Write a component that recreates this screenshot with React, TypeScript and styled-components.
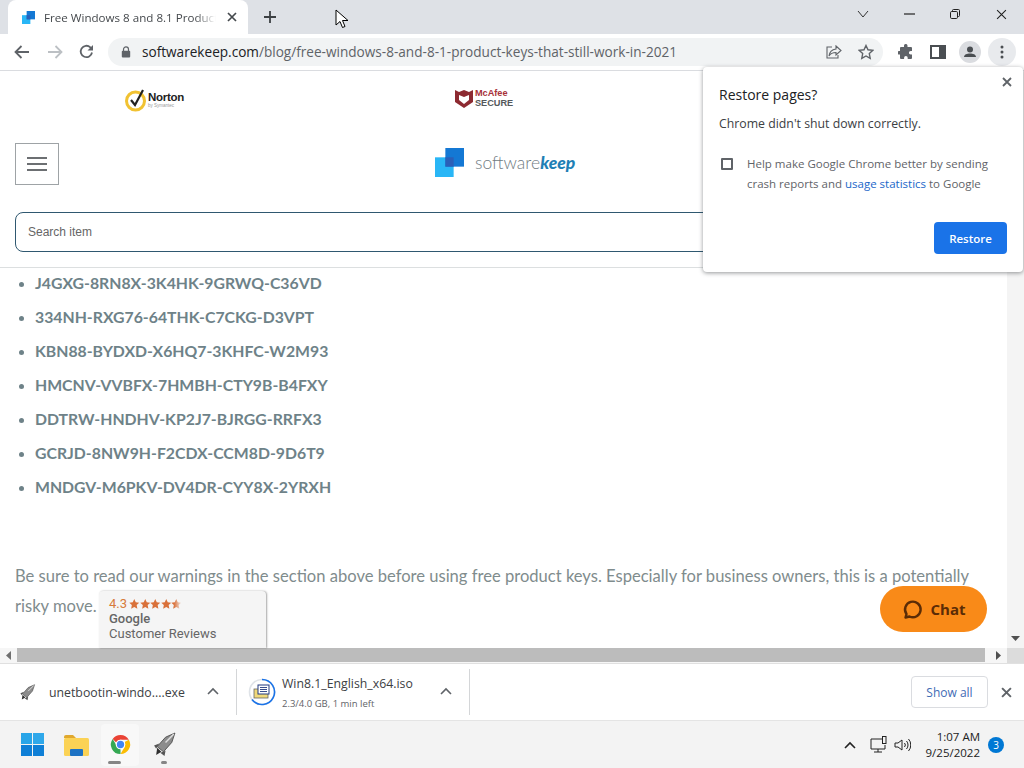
import styled, { createGlobalStyle } from "styled-components";

const Global = createGlobalStyle`
  html, body { margin: 0; padding: 0; background: #fff; }
  body { font-family: "Open Sans", "Liberation Sans", sans-serif; }
  * { box-sizing: border-box; }
`;

const Screen = styled.div`
  position: relative;
  width: 1024px;
  height: 768px;
  overflow: hidden;
  display: flex;
  flex-direction: column;
  background: #fff;
`;

/* ---- tab strip ---- */
const TabStrip = styled.div`
  height: 34px;
  background: #dee1e6;
  display: flex;
  align-items: flex-end;
  padding-left: 8px;
`;
const Tab = styled.div`
  width: 240px;
  height: 34px;
  background: #fff;
  border-radius: 8px 8px 0 0;
  display: flex;
  align-items: center;
  padding: 0 10px 0 14px;
`;
const TabTitle = styled.span`
  margin-left: 9px;
  width: 172px;
  font-size: 11.6px;
  color: #45494d;
  white-space: nowrap;
  -webkit-mask-image: linear-gradient(90deg, #000 88%, transparent);
  mask-image: linear-gradient(90deg, #000 88%, transparent);
`;
const TabClose = styled.span`
  display: flex;
  margin-left: 11px;
`;
const NewTab = styled.span`
  display: flex;
  align-self: center;
  margin-left: 16px;
`;
const WindowControls = styled.div`
  margin-left: auto;
  align-self: flex-start;
  height: 28px;
  display: flex;
  align-items: center;
`;
const WinButton = styled.span`
  width: 46px;
  display: flex;
  justify-content: center;
`;
const Cursor = styled.svg`
  position: absolute;
  left: 335px;
  top: 9px;
`;

/* ---- toolbar ---- */
const Toolbar = styled.div`
  height: 37px;
  background: #fff;
  border-bottom: 1px solid #dadce0;
  display: flex;
  align-items: center;
  padding: 0 6px 1px 14px;
`;
const NavButton = styled.span<{ $w: number }>`
  width: ${(p) => p.$w}px;
  display: flex;
`;
const Omnibox = styled.div`
  width: 775px;
  height: 28px;
  border-radius: 14px;
  background: #f1f3f4;
  display: flex;
  align-items: center;
  padding: 0 9px 0 13px;
  margin-left: 2px;
`;
const Url = styled.span`
  margin-left: 11px;
  font-size: 13.6px;
  color: #5f6368;
  white-space: nowrap;
  b {
    font-weight: 400;
    color: #202124;
  }
`;
const OmniActions = styled.div`
  margin-left: auto;
  display: flex;
  gap: 16px;
  align-items: center;
`;
const ToolIcons = styled.div`
  margin-left: 15px;
  display: flex;
  align-items: center;
  gap: 16px;
`;
const ProfileIcon = styled.svg`
  margin-left: -3px;
`;
const MenuCircle = styled.span`
  width: 28px;
  height: 28px;
  border-radius: 50%;
  background: #e8eaed;
  display: flex;
  align-items: center;
  justify-content: center;
  margin-left: -9px;
`;

/* ---- web page ---- */
const Viewport = styled.div`
  position: relative;
  height: 577px;
  display: flex;
`;
const Page = styled.div`
  flex: 1;
  overflow: hidden;
  font-family: Lato, "Open Sans", sans-serif;
`;
const TrustRow = styled.div`
  height: 58px;
  display: flex;
  align-items: center;
  padding-left: 125px;
  gap: 271px;
`;
const Logo = styled.div<{ $lift?: number }>`
  display: flex;
  align-items: center;
  gap: 2px;
  margin-bottom: ${(p) => p.$lift ?? 0}px;
`;
const LogoText = styled.div`
  display: flex;
  flex-direction: column;
  font-family: "Liberation Sans", sans-serif;
`;
const NortonName = styled.span`
  font-size: 11.5px;
  font-weight: 700;
  letter-spacing: -0.3px;
  line-height: 11px;
  color: #222;
`;
const NortonBy = styled.span`
  font-size: 4.5px;
  line-height: 6px;
  color: #999;
`;
const McAfeeName = styled.span<{ $dark?: boolean }>`
  font-size: 9.2px;
  font-weight: 700;
  line-height: 10px;
  color: ${(p) => (p.$dark ? "#55595c" : "#a8323a")};
`;
const HeaderRow = styled.div`
  height: 60px;
  margin-top: 5px;
  padding-left: 15px;
  display: flex;
  align-items: center;
`;
const Burger = styled.div`
  width: 44px;
  height: 42px;
  border: 1px solid #9ea3a6;
  display: flex;
  flex-direction: column;
  align-items: center;
  justify-content: center;
  gap: 4px;
  i {
    display: block;
    width: 20px;
    height: 2px;
    background: #6c6f72;
  }
`;
const Brand = styled.div`
  margin: 0 0 3px 376px;
  display: flex;
  align-items: center;
`;
const BrandName = styled.span`
  margin-left: 11px;
  font-size: 17.5px;
  font-weight: 300;
  color: #6f7b82;
  b {
    font-weight: 900;
    font-style: italic;
    color: #1f7fb5;
  }
`;
const SearchBand = styled.div`
  height: 56px;
  margin-top: 18px;
  padding: 0 15px;
  border-bottom: 1px solid #dcdfe0;
`;
const SearchBox = styled.div`
  width: 960px;
  height: 40px;
  border: 1px solid #2f5870;
  border-radius: 8px;
  padding-left: 12px;
  display: flex;
  align-items: center;
  font-family: "Liberation Sans", sans-serif;
  font-size: 12px;
  color: #666;
`;
const KeyList = styled.ul`
  margin: 0;
  padding: 0 0 0 35px;
`;
const Key = styled.li`
  height: 34px;
  line-height: 29px;
  font-size: 15.8px;
  font-weight: 700;
  color: #6e8288;
  &::marker {
    font-size: 14px;
  }
`;
const Para = styled.p`
  margin: 55px 0 0 15px;
  width: 965px;
  font-size: 16.57px;
  line-height: 30px;
  color: #7f8c8d;
`;
const VScroll = styled.div`
  width: 17px;
  background: #f4f4f4;
  display: flex;
  align-items: flex-end;
  justify-content: center;
  padding-bottom: 7px;
`;
const Reviews = styled.div`
  position: absolute;
  left: 99px;
  top: 520px;
  width: 167px;
  height: 57px;
  padding: 5px 0 0 10px;
  background: #f5f5f5;
  border-radius: 4px 4px 0 0;
  box-shadow: 1px 0 2px rgba(0, 0, 0, 0.35);
  font-family: Roboto, "Liberation Sans", sans-serif;
  color: #666;
  font-size: 13px;
  line-height: 15px;
`;
const Rating = styled.div`
  display: flex;
  align-items: center;
  gap: 2px;
  color: #d77b3a;
  font-size: 13px;
`;
const Stars = styled.span`
  display: flex;
  -webkit-mask-image: linear-gradient(90deg, #000 85%, transparent);
  mask-image: linear-gradient(90deg, #000 85%, transparent);
`;
const ReviewBrand = styled.div`
  font-weight: 500;
`;
const ChatButton = styled.div`
  position: absolute;
  left: 880px;
  top: 515px;
  width: 107px;
  height: 46px;
  border-radius: 23px;
  background: #f98a18;
  display: flex;
  align-items: center;
  justify-content: center;
  gap: 8px;
  font-family: "Open Sans", sans-serif;
  font-size: 15px;
  font-weight: 700;
  color: #5b2c06;
`;
const Bubble = styled.div`
  position: absolute;
  left: 703px;
  top: -4px;
  width: 320px;
  height: 205px;
  background: #fff;
  border-radius: 4px;
  box-shadow: 0 1px 4px rgba(60, 64, 67, 0.55);
  padding: 16px;
  font-family: "Open Sans", sans-serif;
`;
const BubbleClose = styled.span`
  position: absolute;
  right: 11px;
  top: 10px;
  display: flex;
`;
const BubbleTitle = styled.div`
  font-size: 14px;
  line-height: 24px;
  color: #202124;
`;
const BubbleText = styled.div`
  margin-top: 8px;
  font-size: 12.3px;
  line-height: 18px;
  color: #3c4043;
`;
const OptIn = styled.div`
  margin-top: 21px;
  display: flex;
  font-size: 11.5px;
  line-height: 20px;
  color: #5f6368;
  a {
    color: #1a67c9;
  }
`;
const Check = styled.span`
  flex: none;
  width: 12px;
  height: 12px;
  margin: 4px 14px 0 2px;
  border: 2px solid #5f6368;
  border-radius: 1px;
`;
const BubbleFooter = styled.div`
  margin-top: 28px;
  display: flex;
  justify-content: flex-end;
`;
const PrimaryButton = styled.div`
  width: 73px;
  height: 32px;
  background: #1a73e8;
  border-radius: 4px;
  color: #fff;
  font-size: 11.5px;
  font-weight: 600;
  display: flex;
  align-items: center;
  justify-content: center;
`;

/* ---- horizontal scrollbar ---- */
const HScroll = styled.div`
  height: 16px;
  background: #f6f6f6;
  border-bottom: 1px solid #e0e0e0;
  display: flex;
`;
const HArrow = styled.span<{ $push?: boolean }>`
  width: 17px;
  height: 14px;
  margin-left: ${(p) => (p.$push ? "5px" : "0")};
  display: flex;
  align-items: center;
  justify-content: center;
`;
const HThumb = styled.div`
  width: 968px;
  height: 14px;
  background: #bcbcbc;
`;
const Corner = styled.div`
  width: 17px;
  height: 15px;
  background: #dcdcdc;
`;

/* ---- download shelf ---- */
const Shelf = styled.div`
  height: 57px;
  background: #fff;
  border-bottom: 1px solid #e4e4e4;
  display: flex;
  align-items: center;
`;
const Download = styled.div<{ $w: number; $pad: number }>`
  width: ${(p) => p.$w}px;
  height: 46px;
  border-right: 1px solid #d4d6d8;
  display: flex;
  align-items: center;
  padding-left: ${(p) => p.$pad}px;
  position: relative;
`;
const FileName = styled.div<{ $flush?: boolean }>`
  margin-left: ${(p) => (p.$flush ? 0 : 13)}px;
  font-size: 12.3px;
  color: #3c4043;
  white-space: nowrap;
`;
const FileStack = styled.div`
  margin-left: 6px;
  display: flex;
  flex-direction: column;
  gap: 5px;
`;
const FileSub = styled.div`
  font-size: 9.5px;
  color: #5f6368;
`;
const Chevron = styled.span`
  position: absolute;
  right: 17px;
  top: 18px;
  display: flex;
`;
const ShowAll = styled.div`
  margin-left: auto;
  width: 77px;
  height: 32px;
  border: 1px solid #dadce0;
  border-radius: 4px;
  color: #3f6cb5;
  font-size: 12px;
  font-weight: 500;
  display: flex;
  align-items: center;
  justify-content: center;
`;
const ShelfClose = styled.span`
  margin: 0 12px 0 13px;
  display: flex;
`;

/* ---- taskbar ---- */
const Taskbar = styled.div`
  flex: 1;
  background: #f3f3f3;
  display: flex;
  align-items: center;
  padding: 0 20px 0 21px;
`;
const TaskIcon = styled.span<{ $active?: boolean; $first?: boolean }>`
  position: relative;
  width: ${(p) => (p.$active ? 38 : 44)}px;
  height: 42px;
  margin: 0 ${(p) => (p.$active ? 3 : 0)}px 0 ${(p) => (p.$first ? 10 : p.$active ? 3 : 0)}px;
  display: flex;
  align-items: center;
  justify-content: center;
  background: ${(p) => (p.$active ? "#f8f8f8" : "transparent")};
  border-radius: 4px;
`;
const RunDot = styled.i<{ $w: number; $off: number }>`
  position: absolute;
  bottom: 2px;
  left: 50%;
  margin-left: ${(p) => p.$off}px;
  width: ${(p) => p.$w}px;
  height: 3px;
  border-radius: 2px;
  background: #858585;
`;
const Tray = styled.div`
  margin-left: auto;
  display: flex;
  align-items: center;
`;
const TrayIcon = styled.svg<{ $gap: number }>`
  margin-left: ${(p) => p.$gap}px;
`;
const Clock = styled.div`
  margin-left: 15px;
  text-align: right;
  font-size: 11.5px;
  line-height: 16px;
  color: #222;
`;
const Badge = styled.span`
  margin-left: 8px;
  width: 16px;
  height: 16px;
  border-radius: 50%;
  background: #0078d4;
  color: #fff;
  font-size: 10px;
  display: flex;
  align-items: center;
  justify-content: center;
`;

/* ---- drawings ---- */
const X = ({ s = 10, w = 1.6, c = "#45494d" }: { s?: number; w?: number; c?: string }) => (
  <svg width={s} height={s} viewBox="0 0 10 10">
    <path d="M1 1l8 8M9 1l-8 8" stroke={c} strokeWidth={w} fill="none" />
  </svg>
);
const Squares = ({ s }: { s: number }) => (
  <svg width={s} height={s} viewBox="0 0 28 28">
    <rect x="0" y="9" width="18" height="19" fill="#29b6f6" />
    <rect x="10" y="0" width="18" height="18" fill="#1478d4" />
    <rect x="10" y="9" width="8" height="9" fill="#2a5fb8" />
  </svg>
);
const Up = ({ c = "#5f6368" }: { c?: string }) => (
  <svg width="12" height="8" viewBox="0 0 12 8">
    <path d="M1 7l5-5 5 5" stroke={c} strokeWidth="1.6" fill="none" />
  </svg>
);
const Rocket = ({ s }: { s: number }) => (
  <svg width={s} height={s} viewBox="0 0 24 24">
    <path d="M22 1l-3 9-8 9-6-5 8-9z" fill="#8c8c8c" stroke="#444" strokeWidth="0.8" />
    <path d="M7 11l-5 2 2 3zM13 18l-1 5-4-3z" fill="#555" />
    <path d="M5 15l4 4-5 3z" fill="#2f2f2f" />
    <path d="M21 2l-8 8" stroke="#ddd" strokeWidth="1.4" />
  </svg>
);
const Star = () => (
  <svg width="10.5" height="10" viewBox="0 0 10 10">
    <path d="M5 0l1.500 3.300 3.500.4-2.600 2.400.7 3.600L5 7.900 1.900 9.700l.7-3.600L0 3.700l3.500-.4z" fill="#d9713a" />
  </svg>
);

const keys = [
  "J4GXG-8RN8X-3K4HK-9GRWQ-C36VD",
  "334NH-RXG76-64THK-C7CKG-D3VPT",
  "KBN88-BYDXD-X6HQ7-3KHFC-W2M93",
  "HMCNV-VVBFX-7HMBH-CTY9B-B4FXY",
  "DDTRW-HNDHV-KP2J7-BJRGG-RRFX3",
  "GCRJD-8NW9H-F2CDX-CCM8D-9D6T9",
  "MNDGV-M6PKV-DV4DR-CYY8X-2YRXH",
];

const App = () => {
  return (
    <Screen>
      <Global />
      <TabStrip>
        <Tab>
          <Squares s={13} />
          <TabTitle>Free Windows 8 and 8.1 Product</TabTitle>
          <TabClose>
            <X s={10} w={1.7} />
          </TabClose>
        </Tab>
        <NewTab>
          <svg width="12" height="12" viewBox="0 0 12 12">
            <path d="M6 0v12M0 6h12" stroke="#3c4043" strokeWidth="1.8" />
          </svg>
        </NewTab>
        <WindowControls>
          <WinButton>
            <svg width="12" height="8" viewBox="0 0 12 8">
              <path d="M1 1l5 6 5-6" stroke="#333" fill="none" />
            </svg>
          </WinButton>
          <WinButton>
            <svg width="11" height="2" viewBox="0 0 11 2">
              <path d="M0 1h11" stroke="#222" strokeWidth="1.2" />
            </svg>
          </WinButton>
          <WinButton>
            <svg width="10" height="10" viewBox="0 0 10 10">
              <rect x="0.5" y="2.5" width="7" height="7" rx="1.2" stroke="#222" fill="none" />
              <path d="M2.500 2.500v-1a1 1 0 0 1 1-1h5a1 1 0 0 1 1 1v5a1 1 0 0 1-1 1h-1" stroke="#222" fill="none" />
            </svg>
          </WinButton>
          <WinButton>
            <X s={11} w={1} c="#222" />
          </WinButton>
        </WindowControls>
      </TabStrip>

      <Toolbar>
        <NavButton $w={33}>
          <svg width="16" height="14" viewBox="0 0 16 14">
            <path d="M15 7H2M7.500 1L1.500 7l6 6" stroke="#5f6368" strokeWidth="1.800" fill="none" />
          </svg>
        </NavButton>
        <NavButton $w={32}>
          <svg width="16" height="14" viewBox="0 0 16 14">
            <path d="M1 7h13M8.500 1l6 6-6 6" stroke="#bcc0c4" strokeWidth="1.800" fill="none" />
          </svg>
        </NavButton>
        <NavButton $w={27}>
          <svg width="15" height="15" viewBox="0 0 15 15">
            <path d="M13 8.500A5.700 5.700 0 1 1 11.300 3.300L13.500 5.200" stroke="#5f6368" strokeWidth="1.800" fill="none" />
            <path d="M14 1v5.500H8.500z" fill="#5f6368" />
          </svg>
        </NavButton>
        <Omnibox>
          <svg width="10" height="12" viewBox="0 0 10 12">
            <path d="M2.500 5V3.400a2.500 2.500 0 0 1 5 0V5" stroke="#5f6368" strokeWidth="1.200" fill="none" />
            <rect x="0.800" y="4.800" width="8.400" height="6.700" rx="1" fill="#5f6368" />
          </svg>
          <Url>
            <b>softwarekeep.com</b>/blog/free-windows-8-and-8-1-product-keys-that-still-work-in-2021
          </Url>
          <OmniActions>
            <svg width="16" height="14" viewBox="0 0 16 14">
              <path d="M10 1l5 4.500-5 4.500V7.500C6.500 7.500 4.500 8.500 3 11c.5-4 3-6.500 7-7z" stroke="#5f6368" strokeWidth="1.100" fill="none" />
              <path d="M6 2H1v11h11V10" stroke="#5f6368" strokeWidth="1.100" fill="none" />
            </svg>
            <svg width="16" height="16" viewBox="0 0 16 16">
              <path d="M8 1.500l2 4.300 4.700.6-3.400 3.200.9 4.700L8 12l-4.200 2.300.9-4.700L1.300 6.400 6 5.800z" stroke="#5f6368" strokeWidth="1.400" fill="none" />
            </svg>
          </OmniActions>
        </Omnibox>
        <ToolIcons>
          <svg width="16" height="16" viewBox="0 0 16 16">
            <path d="M6 1.500a1.800 1.800 0 0 1 3.500 0V3H13a1 1 0 0 1 1 1v3h-1.300a1.800 1.800 0 0 0 0 3.600H14V14a1 1 0 0 1-1 1h-3.300v-1.300a1.800 1.800 0 0 0-3.600 0V15H3a1 1 0 0 1-1-1v-3.500H.800a1.800 1.800 0 0 1 0-3.500H2V4a1 1 0 0 1 1-1h3z" fill="#5f6368" />
          </svg>
          <svg width="16" height="14" viewBox="0 0 16 14">
            <rect x="1" y="1" width="14" height="12" stroke="#4a4e52" strokeWidth="2" fill="none" />
            <rect x="9" y="1" width="6" height="12" fill="#4a4e52" />
          </svg>
          <ProfileIcon width="22" height="22" viewBox="0 0 22 22">
            <circle cx="11" cy="11" r="11" fill="#dadce0" />
            <circle cx="11" cy="8.500" r="3" fill="#4a4e52" />
            <path d="M5 16c0-2.500 3-3.600 6-3.600s6 1.100 6 3.600z" fill="#4a4e52" />
          </ProfileIcon>
          <MenuCircle>
            <svg width="4" height="14" viewBox="0 0 4 14">
              <circle cx="2" cy="2" r="1.500" fill="#4a4e52" />
              <circle cx="2" cy="7" r="1.500" fill="#4a4e52" />
              <circle cx="2" cy="12" r="1.500" fill="#4a4e52" />
            </svg>
          </MenuCircle>
        </ToolIcons>
      </Toolbar>

      <Viewport>
        <Page>
          <TrustRow>
            <Logo>
              <svg width="21" height="24" viewBox="0 0 21 24">
                <circle cx="10.500" cy="13" r="9" stroke="#f1c232" strokeWidth="3" fill="#fff" />
                <path d="M6 12l4 5 8-15" stroke="#222" strokeWidth="2.200" fill="none" />
              </svg>
              <LogoText>
                <NortonName>Norton</NortonName>
                <NortonBy>by Symantec</NortonBy>
              </LogoText>
            </Logo>
            <Logo $lift={4}>
              <svg width="18" height="20" viewBox="0 0 18 20">
                <path d="M0 2l4 2 5-2 5 2 4-2v12l-9 6-9-6z" fill="#8d2a31" />
                <path d="M4 7l5 2 5-2v5l-5 4-5-4z" fill="#fff" />
              </svg>
              <LogoText>
                <McAfeeName>McAfee</McAfeeName>
                <McAfeeName $dark>SECURE</McAfeeName>
              </LogoText>
            </Logo>
          </TrustRow>
          <HeaderRow>
            <Burger>
              <i />
              <i />
              <i />
            </Burger>
            <Brand>
              <Squares s={29} />
              <BrandName>
                software<b>keep</b>
              </BrandName>
            </Brand>
          </HeaderRow>
          <SearchBand>
            <SearchBox>Search item</SearchBox>
          </SearchBand>
          <KeyList>
            {keys.map((k) => (
              <Key key={k}>{k}</Key>
            ))}
          </KeyList>
          <Para>
            Be sure to read our warnings in the section above before using free product keys. Especially for business
            owners, this is a potentially risky move.
          </Para>
        </Page>
        <VScroll>
          <svg width="9" height="5" viewBox="0 0 9 5">
            <path d="M0 0h9L4.500 5z" fill="#505050" />
          </svg>
        </VScroll>

        <Reviews>
          <Rating>
            4.3
            <Stars>
              <Star />
              <Star />
              <Star />
              <Star />
              <Star />
            </Stars>
          </Rating>
          <ReviewBrand>Google</ReviewBrand>
          <div>Customer Reviews</div>
        </Reviews>

        <ChatButton>
          <svg width="21" height="21" viewBox="0 0 21 21">
            <path d="M3.500 18.500l1-3.500a7.800 7.800 0 1 1 3 2.500z" stroke="#5b2c06" strokeWidth="2.400" fill="none" strokeLinejoin="round" />
          </svg>
          Chat
        </ChatButton>

        <Bubble>
          <BubbleClose>
            <X s={10} w={1.8} c="#5f6368" />
          </BubbleClose>
          <BubbleTitle>Restore pages?</BubbleTitle>
          <BubbleText>Chrome didn't shut down correctly.</BubbleText>
          <OptIn>
            <Check />
            <div>
              Help make Google Chrome better by sending
              <br />
              crash reports and <a>usage statistics</a> to Google
            </div>
          </OptIn>
          <BubbleFooter>
            <PrimaryButton>Restore</PrimaryButton>
          </BubbleFooter>
        </Bubble>
      </Viewport>

      <HScroll>
        <HArrow>
          <svg width="5" height="9" viewBox="0 0 5 9">
            <path d="M5 0v9L0 4.500z" fill="#707070" />
          </svg>
        </HArrow>
        <HThumb />
        <HArrow $push>
          <svg width="5" height="9" viewBox="0 0 5 9">
            <path d="M0 0v9l5-4.500z" fill="#505050" />
          </svg>
        </HArrow>
        <Corner />
      </HScroll>

      <Shelf>
        <Download $w={237} $pad={19}>
          <Rocket s={17} />
          <FileName>unetbootin-windo....exe</FileName>
          <Chevron>
            <Up />
          </Chevron>
        </Download>
        <Download $w={233} $pad={11}>
          <svg width="28" height="28" viewBox="0 0 28 28">
            <circle cx="14" cy="14" r="12.500" stroke="#dfe3e8" strokeWidth="1.600" fill="none" />
            <path d="M14 1.500A12.500 12.500 0 1 1 4 21.500" stroke="#1a73e8" strokeWidth="1.600" fill="none" />
            <rect x="6" y="11" width="14" height="9" fill="#f0d97a" stroke="#666" strokeWidth="0.800" />
            <rect x="10" y="7" width="11" height="9" fill="#fff" stroke="#223a80" />
            <path d="M12 9.500h7M12 11.500h7M12 13.500h7" stroke="#223a80" strokeWidth="0.900" />
          </svg>
          <FileStack>
            <FileName $flush>Win8.1_English_x64.iso</FileName>
            <FileSub>2.3/4.0 GB, 1 min left</FileSub>
          </FileStack>
          <Chevron>
            <Up />
          </Chevron>
        </Download>
        <ShowAll>Show all</ShowAll>
        <ShelfClose>
          <X s={11} w={1.800} c="#5f6368" />
        </ShelfClose>
      </Shelf>

      <Taskbar>
        <svg width="23" height="23" viewBox="0 0 23 23">
          <rect x="0" y="0" width="11" height="11" fill="#29a5e8" />
          <rect x="12" y="0" width="11" height="11" fill="#2fa8ea" />
          <rect x="0" y="12" width="11" height="11" fill="#0f7fd6" />
          <rect x="12" y="12" width="11" height="11" fill="#0f7fd6" />
        </svg>
        <TaskIcon $first>
          <svg width="25" height="22" viewBox="0 0 25 22">
            <path d="M0 3a2 2 0 0 1 2-2h7l3 3h-12z" fill="#e0a82e" />
            <rect x="0" y="4" width="25" height="18" rx="1.500" fill="#fbd255" />
            <rect x="6" y="15" width="13" height="7" rx="1" fill="#1d72c4" />
          </svg>
        </TaskIcon>
        <TaskIcon $active>
          <svg width="23" height="23" viewBox="0 0 24 24">
            <path d="M12 2a10 10 0 0 1 8.700 5H12a5 5 0 0 0-4.500 2.800L3.800 6.200A10 10 0 0 1 12 2z" fill="#ea4335" />
            <path d="M20.700 7A10 10 0 0 1 12 22l4.300-7.500A5 5 0 0 0 16.300 9.500z" fill="#fbbc04" />
            <path d="M12 22A10 10 0 0 1 3.800 6.200l4.400 7.300A5 5 0 0 0 12 17z" fill="#34a853" />
            <circle cx="12" cy="12" r="5" fill="#fff" />
            <circle cx="12" cy="12" r="3.800" fill="#4285f4" />
          </svg>
          <RunDot $w={13} $off={-12} />
        </TaskIcon>
        <TaskIcon>
          <Rocket s={25} />
          <RunDot $w={6} $off={-3} />
        </TaskIcon>
        <Tray>
          <Up c="#222" />
          <TrayIcon $gap={14} width="17" height="17" viewBox="0 0 17 17">
            <path d="M12 3H1v10h14V9M4 16h8M8 13v3" stroke="#222" fill="none" />
            <rect x="12.500" y="0.500" width="3.500" height="7" stroke="#222" fill="#f3f3f3" />
          </TrayIcon>
          <TrayIcon $gap={7} width="17" height="14" viewBox="0 0 17 14">
            <path d="M1 5h3l4-3v10l-4-3H1zM10.500 5a3 3 0 0 1 0 4M12.500 3a6 6 0 0 1 0 8M14.500 1a9 9 0 0 1 0 12" stroke="#222" fill="none" />
          </TrayIcon>
          <Clock>
            1:07 AM
            <br />
            9/25/2022
          </Clock>
          <Badge>3</Badge>
        </Tray>
      </Taskbar>

      <Cursor width="14" height="20" viewBox="0 0 14 20">
        <path d="M1 1v15l4-3.500 2.500 6 2.500-1-2.500-6H13z" fill="#fff" stroke="#000" />
      </Cursor>
    </Screen>
  );
};

export default App;
